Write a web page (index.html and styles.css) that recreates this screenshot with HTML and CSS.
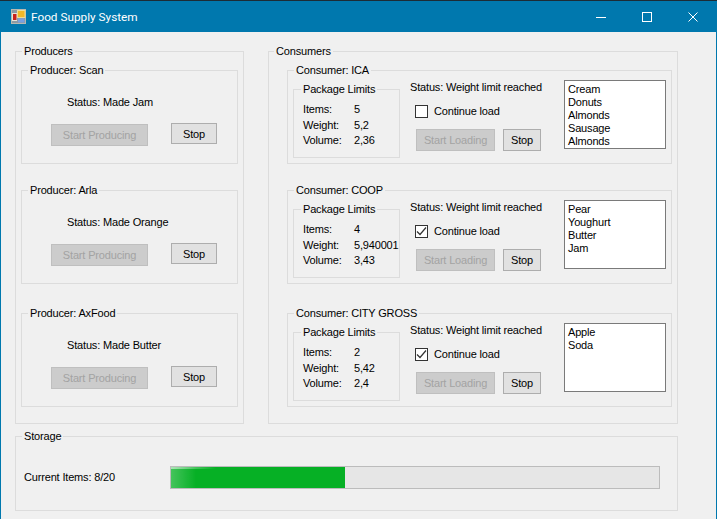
FILE: index.html
```html
<!DOCTYPE html>
<html lang="en">
<head>
    <meta charset="UTF-8">
    <title>Food Supply System</title>
    <link rel="stylesheet" href="styles.css">
</head>
<body>
    <div class="window">
        <!-- Title bar -->
        <header class="titlebar">
            <svg class="app-icon" width="16" height="16" viewBox="0 0 16 16">
                <rect x="0.5" y="0.5" width="14" height="14" fill="#8c9aa4" stroke="#b8b8b0"/>
                <rect x="1" y="4" width="5" height="8" fill="#e8e4d8"/>
                <rect x="2" y="5" width="3.5" height="6" fill="#c8201a"/>
                <rect x="6.5" y="1.5" width="7.5" height="7" fill="#f0b828" stroke="#ecdc98"/>
                <rect x="7" y="9.5" width="6.5" height="4" fill="#7aa0e0"/>
            </svg>
            <h1 class="title">Food Supply System</h1>
            <div class="win-buttons">
                <span class="win-btn">
                    <svg width="10" height="10" viewBox="0 0 10 10"><path d="M0 5.5H10" stroke="#fff" fill="none"/></svg>
                </span>
                <span class="win-btn">
                    <svg width="10" height="10" viewBox="0 0 10 10"><rect x="0.5" y="0.5" width="9" height="9" stroke="#fff" fill="none"/></svg>
                </span>
                <span class="win-btn">
                    <svg width="10" height="10" viewBox="0 0 10 10"><path d="M0.5 0.5L9.5 9.5M9.5 0.5L0.5 9.5" stroke="#fff" fill="none"/></svg>
                </span>
            </div>
        </header>

        <main class="client">
            <div class="columns">
                <!-- Producers -->
                <fieldset class="group producers">
                    <legend>Producers</legend>

                    <fieldset class="group producer">
                        <legend>Producer: Scan</legend>
                        <p class="producer-status">Status: Made Jam</p>
                        <div class="producer-actions">
                            <button class="btn btn-start-producing" disabled>Start Producing</button>
                            <button class="btn btn-stop">Stop</button>
                        </div>
                    </fieldset>

                    <fieldset class="group producer">
                        <legend>Producer: Arla</legend>
                        <p class="producer-status">Status: Made Orange</p>
                        <div class="producer-actions">
                            <button class="btn btn-start-producing" disabled>Start Producing</button>
                            <button class="btn btn-stop">Stop</button>
                        </div>
                    </fieldset>

                    <fieldset class="group producer group-last">
                        <legend>Producer: AxFood</legend>
                        <p class="producer-status">Status: Made Butter</p>
                        <div class="producer-actions">
                            <button class="btn btn-start-producing" disabled>Start Producing</button>
                            <button class="btn btn-stop">Stop</button>
                        </div>
                    </fieldset>
                </fieldset>

                <!-- Consumers -->
                <fieldset class="group consumers">
                    <legend>Consumers</legend>

                    <fieldset class="group consumer">
                        <legend>Consumer: ICA</legend>
                        <fieldset class="group limits">
                            <legend>Package Limits</legend>
                            <dl class="limit-rows">
                                <dt>Items:</dt><dd>5</dd>
                                <dt>Weight:</dt><dd>5,2</dd>
                                <dt>Volume:</dt><dd>2,36</dd>
                            </dl>
                        </fieldset>
                        <div class="consumer-controls">
                            <p class="consumer-status">Status: Weight limit reached</p>
                            <div class="check-row">
                                <span class="check"></span>
                                <span>Continue load</span>
                            </div>
                            <div class="consumer-actions">
                                <button class="btn btn-start-loading" disabled>Start Loading</button>
                                <button class="btn btn-stop-small">Stop</button>
                            </div>
                        </div>
                        <ul class="listbox">
                            <li>Cream</li>
                            <li>Donuts</li>
                            <li>Almonds</li>
                            <li>Sausage</li>
                            <li>Almonds</li>
                        </ul>
                    </fieldset>

                    <fieldset class="group consumer">
                        <legend>Consumer: COOP</legend>
                        <fieldset class="group limits">
                            <legend>Package Limits</legend>
                            <dl class="limit-rows">
                                <dt>Items:</dt><dd>4</dd>
                                <dt>Weight:</dt><dd>5,940001</dd>
                                <dt>Volume:</dt><dd>3,43</dd>
                            </dl>
                        </fieldset>
                        <div class="consumer-controls">
                            <p class="consumer-status">Status: Weight limit reached</p>
                            <div class="check-row">
                                <span class="check">
                                    <svg width="11" height="11" viewBox="0 0 11 11"><path d="M1 5.5L4 8.5L10 1.5" stroke="#333" stroke-width="1.2" fill="none"/></svg>
                                </span>
                                <span>Continue load</span>
                            </div>
                            <div class="consumer-actions">
                                <button class="btn btn-start-loading" disabled>Start Loading</button>
                                <button class="btn btn-stop-small">Stop</button>
                            </div>
                        </div>
                        <ul class="listbox">
                            <li>Pear</li>
                            <li>Youghurt</li>
                            <li>Butter</li>
                            <li>Jam</li>
                        </ul>
                    </fieldset>

                    <fieldset class="group consumer group-last">
                        <legend>Consumer: CITY GROSS</legend>
                        <fieldset class="group limits">
                            <legend>Package Limits</legend>
                            <dl class="limit-rows">
                                <dt>Items:</dt><dd>2</dd>
                                <dt>Weight:</dt><dd>5,42</dd>
                                <dt>Volume:</dt><dd>2,4</dd>
                            </dl>
                        </fieldset>
                        <div class="consumer-controls">
                            <p class="consumer-status">Status: Weight limit reached</p>
                            <div class="check-row">
                                <span class="check">
                                    <svg width="11" height="11" viewBox="0 0 11 11"><path d="M1 5.5L4 8.5L10 1.5" stroke="#333" stroke-width="1.2" fill="none"/></svg>
                                </span>
                                <span>Continue load</span>
                            </div>
                            <div class="consumer-actions">
                                <button class="btn btn-start-loading" disabled>Start Loading</button>
                                <button class="btn btn-stop-small">Stop</button>
                            </div>
                        </div>
                        <ul class="listbox">
                            <li>Apple</li>
                            <li>Soda</li>
                        </ul>
                    </fieldset>
                </fieldset>
            </div>

            <!-- Storage -->
            <fieldset class="group storage">
                <legend>Storage</legend>
                <div class="storage-row">
                    <span class="storage-label">Current Items: 8/20</span>
                    <div class="progress">
                        <div class="progress-fill" style="width: 35.7%"></div>
                    </div>
                </div>
            </fieldset>
        </main>
    </div>
</body>
</html>
```

FILE: styles.css
```css
/* Page and window frame */
html, body {
    margin: 0;
    height: 100%;
    overflow: hidden;
}

body {
    font-family: "Liberation Sans", Arial, sans-serif;
    font-size: 11px;
    line-height: 14px;
    letter-spacing: -0.17px;
    color: #000;
    background: #f0f0f0;
}

.window {
    box-sizing: border-box;
    height: 519px;
    border-left: 1px solid #0078ae;
    border-right: 1px solid #0078ae;
}

/* Title bar */
.titlebar {
    display: flex;
    align-items: center;
    height: 32px;
    margin: 0 -1px;
    box-sizing: border-box;
    border-top: 1px solid #1c2c36;
    background: #0078ae;
    color: #fff;
}

.app-icon {
    margin-left: 11px;
}

.title {
    margin: 0 0 0 4px;
    font-family: Roboto, sans-serif;
    font-size: 11.8px;
    font-weight: 400;
    letter-spacing: 0;
}

.win-buttons {
    display: flex;
    margin-left: auto;
    margin-right: 1px;
}

.win-btn {
    display: flex;
    align-items: center;
    justify-content: center;
    width: 46px;
    height: 31px;
}

/* Group boxes */
.client {
    padding: 12px 38px 0 14px;
}

.columns {
    display: flex;
    gap: 24px;
}

.group {
    box-sizing: border-box;
    min-width: 0;
    margin: 0;
    padding: 0 5px;
    border: 1px solid #dcdcdc;
}

.group legend {
    margin-left: 1px;
    padding: 0 2px;
}

.producers,
.consumers {
    display: flex;
    flex-direction: column;
    gap: 19px;
    height: 380px;
    padding-top: 5px;
}

.producers {
    width: 229px;
}

.consumers {
    width: 410px;
}

.consumers > legend {
    margin-left: 0;
}

.producer {
    height: 101px;
}

.group-last {
    margin-top: 3px;
}

.producer-status {
    margin: 18px 0 0 40px;
}

.producer-actions {
    display: flex;
    align-items: flex-start;
    gap: 23px;
    margin: 14px 0 0 24px;
}

/* Buttons */
.btn {
    box-sizing: border-box;
    padding: 0;
    font: inherit;
    letter-spacing: inherit;
    color: #000;
    background: #e1e1e1;
    border: 1px solid #adadad;
}

.btn:disabled {
    color: #a3a3a3;
    background: #cccccc;
    border-color: #bfbfbf;
}

.btn-start-producing {
    width: 97px;
    height: 22px;
    margin-top: 1px;
}

.btn-stop {
    width: 46px;
    height: 21px;
}

.btn-start-loading {
    width: 79px;
    height: 22px;
}

.btn-stop-small {
    width: 38px;
    height: 22px;
}

/* Consumers */
.consumer {
    display: flex;
    align-items: flex-start;
    width: 385px;
    height: 101px;
    margin-left: 13px;
}

.limits {
    flex: none;
    width: 107px;
    height: 76px;
    margin-top: 5px;
    padding: 0 0 0 9px;
}

.group .limits legend {
    margin-left: -2px;
}

.limit-rows {
    display: grid;
    grid-template-columns: 51px 1fr;
    margin: 6px 0 0;
    line-height: 15.5px;
}

.limit-rows dd {
    margin: 0;
}

.consumer-controls {
    flex: none;
    width: 154px;
    margin: 3px 0 0 10px;
}

.consumer-status {
    margin: 0;
}

.check-row {
    display: flex;
    align-items: center;
    gap: 6px;
    margin: 10px 0 0 5px;
}

.check {
    display: flex;
    box-sizing: border-box;
    width: 13px;
    height: 13px;
    background: #fff;
    border: 1px solid #333;
}

.consumer-actions {
    display: flex;
    gap: 8px;
    margin: 11px 0 0 6px;
}

.listbox {
    box-sizing: border-box;
    flex: none;
    width: 102px;
    height: 69px;
    margin: 3px 0 0;
    padding: 2px 3px;
    list-style: none;
    line-height: 13px;
    background: #fff;
    border: 1px solid #7a7a7a;
}

/* Storage */
.storage {
    width: 663px;
    height: 82px;
    margin-top: 5px;
}

.storage-row {
    display: flex;
    align-items: center;
    height: 66px;
    padding-top: 2px;
    box-sizing: border-box;
}

.storage-label {
    width: 146px;
    margin-left: 3px;
}

.progress {
    box-sizing: border-box;
    width: 490px;
    height: 23px;
    background: #e6e6e6;
    border: 1px solid #bcbcbc;
}

.progress-fill {
    height: 100%;
    background:
        linear-gradient(90deg, rgba(255, 255, 255, 0.55), rgba(255, 255, 255, 0) 45px) 0 0 / 100% 2px no-repeat,
        linear-gradient(90deg, rgba(255, 255, 255, 0.25), rgba(255, 255, 255, 0) 25px),
        #06b025;
}
```
